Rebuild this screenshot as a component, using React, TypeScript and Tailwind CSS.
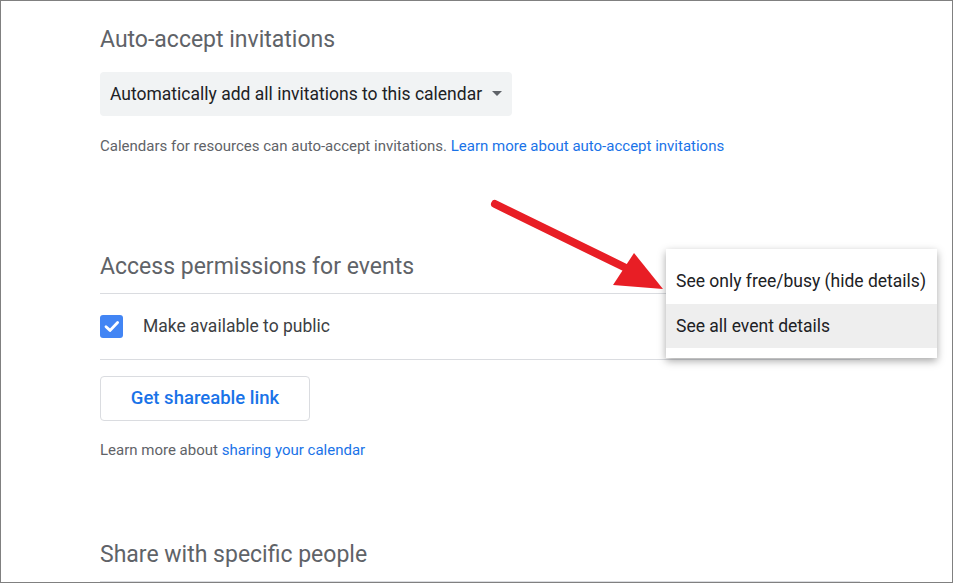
import React from 'react';

const Heading: React.FC<{ children: React.ReactNode; className?: string }> = ({ children, className = '' }) => (
  <h2 className={`text-[23px] leading-[28px] text-[#5f6368] ${className}`} style={{ fontFamily: 'Roboto, sans-serif' }}>
    {children}
  </h2>
);

const App: React.FC = () => {
  return (
    <div className="w-[954px] h-[584px] bg-white overflow-hidden" style={{ fontFamily: 'Roboto, "Liberation Sans", sans-serif' }}>
      <div className="relative w-[953px] h-[583px] border border-[#808080] overflow-hidden">
        <div className="w-[760px] ml-[99px] pt-[25px]">
          {/* Auto-accept */}
          <Heading>Auto-accept invitations</Heading>
          <div className="mt-[18px] w-[412px] h-[44px] bg-[#f1f3f4] rounded-[4px] flex items-center pl-[10px] pr-[10px]">
            <span className="text-[17.5px] text-[#202124] flex-1">Automatically add all invitations to this calendar</span>
            <span className="w-0 h-0 border-l-[5px] border-r-[5px] border-t-[5px] border-l-transparent border-r-transparent border-t-[#5f6368] mb-[2px]"></span>
          </div>
          <p className="mt-[20px] text-[15px] leading-[20px] text-[#5f6368]">
            Calendars for resources can auto-accept invitations.{' '}
            <span className="text-[#1a73e8]">Learn more about auto-accept invitations</span>
          </p>

          {/* Access permissions */}
          <Heading className="mt-[97px]">Access permissions for events</Heading>
          <div className="mt-[12px] border-t border-[#dadce0]"></div>
          <div className="h-[66px] flex items-center border-b border-[#dadce0]">
            <div className="w-[23px] h-[23px] rounded-[3px] bg-[#4285f4] flex items-center justify-center">
              <svg width="16" height="13" viewBox="0 0 16 13">
                <path d="M2 6.8 L6 10.4 L13.6 2.6" fill="none" stroke="white" strokeWidth="2.8" strokeLinecap="round" strokeLinejoin="round" />
              </svg>
            </div>
            <span className="ml-[20px] text-[17.5px] text-[#3c4043]">Make available to public</span>
          </div>
          <button className="mt-[16px] w-[210px] h-[45px] rounded-[4px] border border-[#dadce0] text-[18.5px] text-[#1a73e8] font-medium bg-white">
            Get shareable link
          </button>
          <p className="mt-[19px] text-[15px] leading-[20px] text-[#5f6368]">
            Learn more about <span className="text-[#1a73e8]">sharing your calendar</span>
          </p>

          {/* Share with specific people */}
          <Heading className="mt-[81px]">Share with specific people</Heading>
          <div className="mt-[12px] border-t border-[#dadce0]"></div>
        </div>

        {/* Dropdown menu overlay */}
        <div className="absolute left-[665px] top-[248px] w-[271px] bg-white py-[10px] shadow-[0_3px_8px_rgba(0,0,0,0.35)]">
          <div className="h-[45px] flex items-center px-[10px] text-[17.5px] text-[#202124]">See only free/busy (hide details)</div>
          <div className="h-[44px] flex items-center px-[10px] text-[17.5px] text-[#202124] bg-[#eeeeee]">See all event details</div>
        </div>

        {/* Red annotation arrow */}
        <svg className="absolute left-0 top-0" width="953" height="583" viewBox="0 0 953 583">
          <line x1="494" y1="203" x2="625" y2="267" stroke="#e81e25" strokeWidth="8" strokeLinecap="round" />
          <polygon points="612,284 633,252 662,288" fill="#e81e25" />
        </svg>
      </div>
    </div>
  );
};

export default App;
